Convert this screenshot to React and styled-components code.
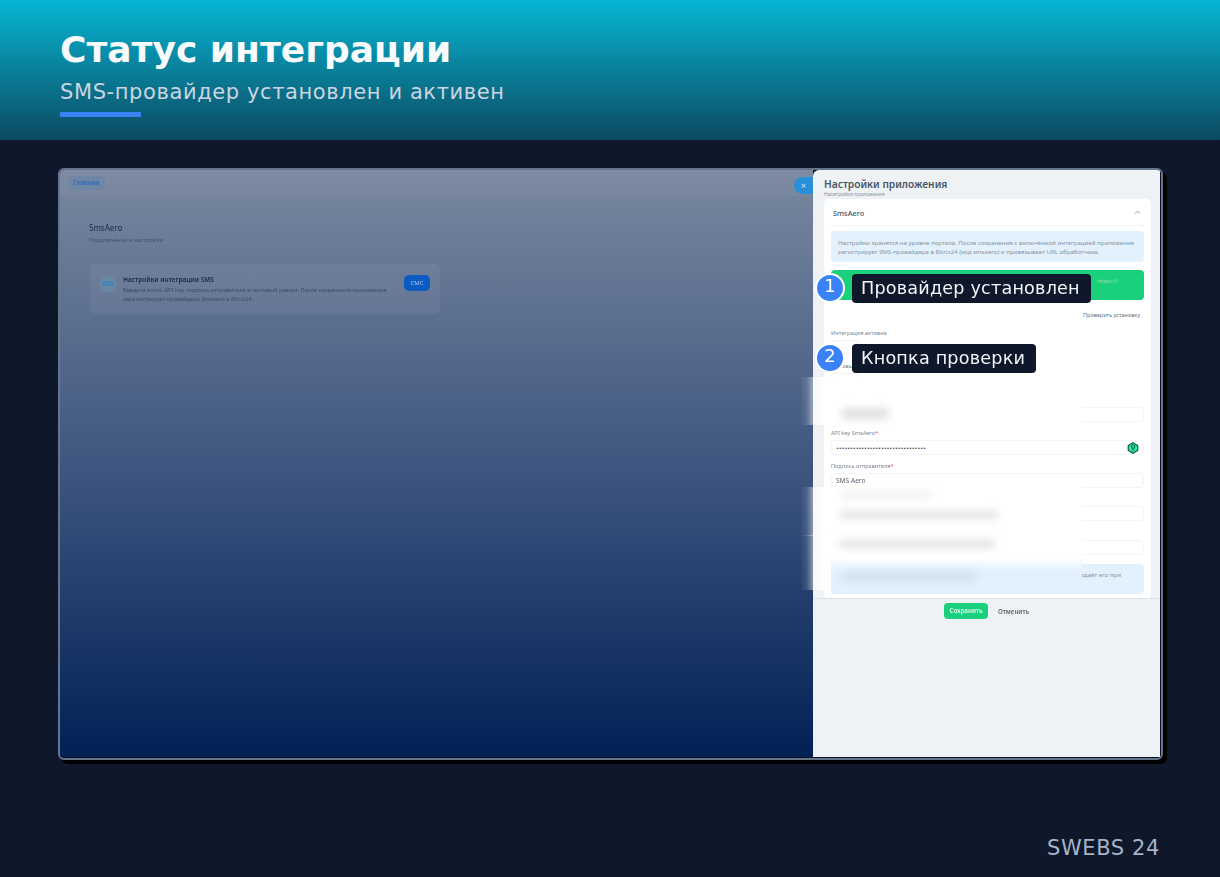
import React from "react";
import styled, { createGlobalStyle } from "styled-components";

const GlobalStyle = createGlobalStyle`
  html, body {
    margin: 0;
    padding: 0;
    background: #0f172a;
  }
  * {
    box-sizing: border-box;
  }
`;

const Page = styled.div`
  width: 1220px;
  height: 877px;
  overflow: hidden;
  display: flex;
  flex-direction: column;
  background: #0f172a;
  font-family: "DejaVu Sans", sans-serif;
`;

const Header = styled.header`
  height: 140px;
  padding: 29px 60px 0;
  background: linear-gradient(180deg, #06b6d4 0%, #0c4a61 100%);
`;

const Title = styled.h1`
  margin: 0;
  font-size: 36px;
  line-height: 42px;
  font-weight: 700;
  color: #f8fafc;
`;

const Subtitle = styled.p`
  margin: 6px 0 0;
  font-size: 21px;
  line-height: 30px;
  letter-spacing: 0.6px;
  color: #cbd5e1;
`;

const Accent = styled.div`
  width: 81px;
  height: 5px;
  margin-top: 5px;
  background: #3b82f6;
`;

const Main = styled.main`
  position: relative;
  margin: 28px 0 0 58px;
  width: 1105px;
  height: 592px;
`;

const Frame = styled.div`
  width: 100%;
  height: 100%;
  display: flex;
  overflow: hidden;
  padding: 0 1px 1px 0;
  border: 2px solid #64748b;
  border-radius: 6px;
  box-shadow: 4px 4px 0 #000;
  font-family: "Noto Sans", sans-serif;
  background: #0b1120;
`;

const Backdrop = styled.section`
  position: relative;
  width: 753px;
  flex: none;
  background: linear-gradient(180deg, #7a889f 0%, #3f5680 50%, #012155 100%);
  filter: blur(0.3px);
`;

const TopBar = styled.div`
  display: flex;
  align-items: flex-start;
  height: 26px;
  padding: 6px 0 0 8px;
  background: rgba(255, 255, 255, 0.03);
`;

const Tab = styled.span`
  height: 14px;
  padding: 0 5px;
  line-height: 14px;
  border-radius: 4px;
  background: #7086a6;
  color: #2f6cb8;
  font-size: 6.5px;
  font-weight: 600;
`;

const CloseTab = styled.span`
  position: absolute;
  top: 7px;
  right: 0;
  width: 19px;
  height: 17px;
  border-radius: 9px 0 0 9px;
  background: #2b8ed8;
  color: #dbeafe;
  font-size: 9px;
  line-height: 17px;
  text-align: center;
`;

const BackdropHead = styled.div`
  margin: 25px 0 19px 29px;
`;

const BackdropTitle = styled.div`
  font-size: 8px;
  line-height: 13px;
  color: #1c2a45;
`;

const BackdropSub = styled.div`
  margin-top: 1px;
  font-size: 5.7px;
  line-height: 10px;
  color: #3f5070;
`;

const IntegrationCard = styled.div`
  display: flex;
  align-items: flex-start;
  gap: 7px;
  width: 350px;
  height: 50px;
  margin-left: 30px;
  padding: 11px 10px;
  border-radius: 6px;
  background: rgba(255, 255, 255, 0.055);
`;

const SmsIcon = styled.div`
  flex: none;
  width: 16px;
  height: 16px;
  margin-top: 1px;
  border-radius: 50%;
  background: #6b87a6;
  color: #2a80c0;
  font-size: 6.5px;
  font-weight: 600;
  line-height: 16px;
  text-align: center;
`;

const IntegrationText = styled.div`
  flex: 1;
`;

const IntegrationTitle = styled.div`
  font-size: 6.5px;
  line-height: 10px;
  font-weight: 600;
  color: #1c2a45;
`;

const IntegrationBody = styled.div`
  margin-top: 1px;
  font-size: 5.65px;
  line-height: 9px;
  color: #3a4b69;
`;

const SmsButton = styled.span`
  flex: none;
  width: 26px;
  height: 16px;
  border-radius: 5px;
  background: #0b5bc2;
  color: #a9c4e4;
  font-size: 6px;
  line-height: 16px;
  text-align: center;
`;

const Drawer = styled.aside`
  flex: 1;
  display: flex;
  flex-direction: column;
  padding: 8px 0 0;
  background: #eef2f5;
  border-radius: 6px 0 0 0;
  filter: blur(0.3px);
`;

const DrawerTitle = styled.div`
  margin-left: 11px;
  font-size: 10.2px;
  line-height: 13px;
  font-weight: 600;
  color: #4a5564;
`;

const DrawerSub = styled.div`
  margin-left: 11px;
  font-size: 5px;
  line-height: 6px;
  color: #8b95a1;
`;

const Card = styled.div`
  width: 327px;
  height: 400px;
  margin: 2px 0 0 11px;
  padding: 0 7px;
  border-radius: 5px;
  background: #fff;
`;

const CardHead = styled.div`
  display: flex;
  align-items: center;
  justify-content: space-between;
  height: 27px;
  padding: 1px 2px 0;
  border-bottom: 1px solid #f1f3f5;
  font-size: 7.4px;
  font-weight: 500;
  color: #45505e;
`;

const InfoBox = styled.div`
  margin-top: ${(props) => props.$top || 5}px;
  height: ${(props) => props.$height || 31}px;
  padding: 7px 7px;
  border-radius: 4px;
  background: #e3f1fc;
  color: #8793a1;
  font-size: 6.1px;
  line-height: 9px;
`;

const StatusBar = styled.div`
  margin-top: 8px;
  height: 30px;
  padding: 7px 26px 0 0;
  border-radius: 4px;
  background: #1bd07d;
  color: #7fe6b5;
  font-size: 6px;
  text-align: right;
`;

const CheckLink = styled.div`
  margin: 11px 0 -1px;
  padding-right: 4px;
  font-size: 5.5px;
  line-height: 9px;
  text-align: right;
  color: #66717e;
`;

const Label = styled.div`
  margin-top: ${(props) => (props.$top || 0) + 1}px;
  margin-bottom: -1px;
  font-size: 5.6px;
  line-height: 9px;
  color: #7d8793;
`;

const Required = styled.span`
  color: #ef4444;
`;

const Input = styled.div`
  display: flex;
  align-items: center;
  justify-content: space-between;
  height: 15px;
  margin-top: ${(props) => props.$top || 3}px;
  padding: 0 4px;
  border: 1px solid #f3f4f6;
  border-radius: 4px;
  background: #fff;
  color: #5c6672;
  font-size: 6.6px;
`;

const Dots = styled.span`
  color: #2e3742;
  font-size: 4.85px;
  letter-spacing: -0.05px;
  font-family: "DejaVu Sans", sans-serif;
`;

const Toggle = styled.div`
  width: 28px;
  height: 14px;
  margin-top: 3px;
  border: 1px solid #f0f2f4;
  border-radius: 4px;
`;

const DrawerActions = styled.div`
  display: flex;
  align-items: center;
  justify-content: center;
  gap: 10px;
  height: 25px;
  margin-top: -1px;
  border-top: 1px solid #dde2e7;
  font-size: 6.2px;
  font-weight: 600;
  color: #5d6671;
`;

const SaveButton = styled.span`
  width: 44px;
  height: 16px;
  border-radius: 4px;
  background: #1bd07d;
  color: #e6fbf1;
  line-height: 16px;
  text-align: center;
`;

const Patch = styled.div`
  position: absolute;
  left: 742px;
  top: ${(props) => props.$top}px;
  width: 282px;
  height: ${(props) => props.$height}px;
  background: linear-gradient(
    90deg,
    rgba(255, 255, 255, 0) 0,
    rgba(255, 255, 255, 0.12) 7px,
    rgba(255, 255, 255, 0.5) 14px,
    #fff 25px
  );
`;

const PatchBlur = styled.div`
  position: absolute;
  left: ${(props) => props.$left}px;
  top: ${(props) => props.$top}px;
  width: ${(props) => props.$width}px;
  height: ${(props) => props.$height}px;
  background: ${(props) => props.$color || "#d6d9dc"};
  filter: blur(4.5px);
`;

const PatchFade = styled.div`
  position: absolute;
  left: 31px;
  right: 0;
  bottom: 0;
  height: 32px;
  background: linear-gradient(180deg, rgba(227, 241, 252, 0) 0, #e3f1fc 40%);
`;

const Callout = styled.div`
  position: absolute;
  left: ${(props) => props.$left}px;
  top: ${(props) => props.$top}px;
  display: flex;
  align-items: center;
  gap: 7px;
`;

const Badge = styled.span`
  width: 30px;
  height: 30px;
  border: 2px solid #fff;
  border-radius: 50%;
  background: #3b82f6;
  color: #fff;
  font-size: 18px;
  line-height: 22px;
  text-align: center;
`;

const CalloutLabel = styled.span`
  height: 29px;
  padding: 0 11px 0 9px;
  border-radius: 4px;
  background: #0f172a;
  color: #f1f5f9;
  font-size: 17.6px;
  line-height: 29px;
  letter-spacing: 0.2px;
  white-space: nowrap;
`;

const Footer = styled.footer`
  margin-top: 75px;
  padding-right: 60px;
  text-align: right;
  font-size: 21px;
  line-height: 26px;
  letter-spacing: 0.6px;
  color: #a5b4c8;
`;

const FloatEnd = styled.span`
  float: right;
  margin: -1px 16px 0 0;
`;

function KeyBadge() {
  return (
    <svg width="12" height="12" viewBox="0 0 24 24">
      <path
        d="M12 1.5 21.5 7v10L12 22.5 2.5 17V7z"
        fill="#2ee6a0"
        stroke="#0b5c46"
        strokeWidth="2.4"
      />
      <circle cx="12" cy="9.5" r="3.4" fill="none" stroke="#0b5c46" strokeWidth="2" />
      <path d="M12 13v5" stroke="#0b5c46" strokeWidth="2" />
    </svg>
  );
}

function Chevron() {
  return (
    <svg width="9" height="9" viewBox="0 0 24 24" fill="none" stroke="#8a94a0" strokeWidth="2.4">
      <path d="m5 15 7-7 7 7" />
    </svg>
  );
}

export default function App() {
  return (
    <Page>
      <GlobalStyle />
      <Header>
        <Title>Статус интеграции</Title>
        <Subtitle>SMS-провайдер установлен и активен</Subtitle>
        <Accent />
      </Header>
      <Main>
        <Frame>
          <Backdrop>
            <TopBar>
              <Tab>Главная</Tab>
            </TopBar>
            <CloseTab>×</CloseTab>
            <BackdropHead>
              <BackdropTitle>SmsAero</BackdropTitle>
              <BackdropSub>Подключение и настройки</BackdropSub>
            </BackdropHead>
            <IntegrationCard>
              <SmsIcon>SMS</SmsIcon>
              <IntegrationText>
                <IntegrationTitle>Настройки интеграции SMS</IntegrationTitle>
                <IntegrationBody>
                  Введите email, API key, подпись отправителя и тестовый режим. После сохранения приложение
                  <br />
                  зарегистрирует провайдера SmsAero в Bitrix24.
                </IntegrationBody>
              </IntegrationText>
              <SmsButton>СМС</SmsButton>
            </IntegrationCard>
          </Backdrop>
          <Drawer>
            <DrawerTitle>Настройки приложения</DrawerTitle>
            <DrawerSub>Насетройки приложения</DrawerSub>
            <Card>
              <CardHead>
                SmsAero
                <Chevron />
              </CardHead>
              <InfoBox>
                Настройки хранятся на уровне портала. После сохранения с включённой интеграцией приложение
                регистрирует SMS-провайдера в Bitrix24 (код smsaero) и привязывает URL обработчика.
              </InfoBox>
              <StatusBar>https://</StatusBar>
              <CheckLink>Проверить установку</CheckLink>
              <Label $top={9}>Интеграция активна</Label>
              <Toggle />
              <Label $top={7}>Тестовый режим</Label>
              <Toggle />
              <Input $top={20} />
              <Label $top={6}>
                API key SmsAero<Required>*</Required>
              </Label>
              <Input>
                <Dots>••••••••••••••••••••••••••••••••</Dots>
                <KeyBadge />
              </Input>
              <Label $top={6}>
                Подпись отправителя<Required>*</Required>
              </Label>
              <Input>SMS Aero</Input>
              <Input $top={18} />
              <Input $top={19} />
              <InfoBox $top={9} $height={30}>
                <FloatEnd>создаёт его при</FloatEnd>
              </InfoBox>
            </Card>
            <DrawerActions>
              <SaveButton>Сохранить</SaveButton>
              Отменить
            </DrawerActions>
          </Drawer>
        </Frame>
        <Patch $top={209} $height={48}>
          <PatchBlur $left={42} $top={32} $width={46} $height={9} />
        </Patch>
        <Patch $top={319} $height={49}>
          <PatchBlur $left={40} $top={6} $width={90} $height={4} $color="#e2e4e7" />
          <PatchBlur $left={40} $top={25} $width={158} $height={6} />
        </Patch>
        <Patch $top={367} $height={55}>
          <PatchBlur $left={40} $top={6} $width={155} $height={6} />
          <PatchFade />
          <PatchBlur $left={42} $top={38} $width={135} $height={7} $color="#cbdcea" />
        </Patch>
        <Callout $left={757} $top={105}>
          <Badge>1</Badge>
          <CalloutLabel>Провайдер установлен</CalloutLabel>
        </Callout>
        <Callout $left={757} $top={175}>
          <Badge>2</Badge>
          <CalloutLabel>Кнопка проверки</CalloutLabel>
        </Callout>
      </Main>
      <Footer>SWEBS 24</Footer>
    </Page>
  );
}
